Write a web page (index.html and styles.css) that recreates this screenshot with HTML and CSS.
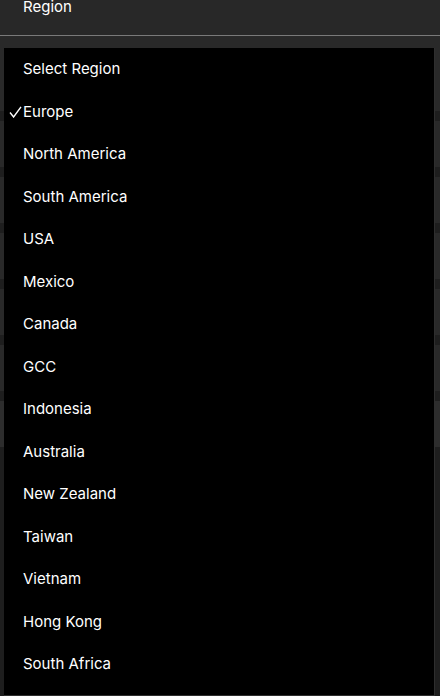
FILE: index.html
```html
<!DOCTYPE html>
<html lang="en">

<head>
  <meta charset="UTF-8" />
  <meta name="viewport" content="width=device-width, initial-scale=1.0" />
  <title>Region Select</title>
  <link rel="stylesheet" href="styles.css">
</head>

<body>
  <div class="field-head">
    <span class="field-label">Region</span>
  </div>
  <div class="rows">
    <div class="row row-first"></div>
    <div class="row"></div>
    <div class="row"></div>
    <div class="row"></div>
    <div class="row"></div>
    <div class="row"></div>
    <div class="row row-hover"></div>
  </div>

  <ul class="dropdown">
    <li class="option">Select Region</li>
    <li class="option selected">
      <svg class="check" width="13" height="12" viewBox="0 0 13 12">
        <polyline points="1,6.5 4.6,11 12,0.8" fill="none" stroke="#fff" stroke-width="1.4" />
      </svg>Europe
    </li>
    <li class="option">North America</li>
    <li class="option">South America</li>
    <li class="option">USA</li>
    <li class="option">Mexico</li>
    <li class="option">Canada</li>
    <li class="option">GCC</li>
    <li class="option">Indonesia</li>
    <li class="option">Australia</li>
    <li class="option">New Zealand</li>
    <li class="option">Taiwan</li>
    <li class="option">Vietnam</li>
    <li class="option">Hong Kong</li>
    <li class="option">South Africa</li>
  </ul>
</body>

</html>
```

FILE: styles.css
```css
body {
  font-family: 'Inter', 'Noto Sans', sans-serif;
  margin: 0;
  background: #1e1e1e;
  color: #fff;
  height: 696px;
  overflow: hidden;
  position: relative;
}

.field-head {
  height: 36px;
  background: #282828;
  border-bottom: 1px solid #7a7a7a;
  padding-left: 23px;
}

.field-label {
  display: block;
  font-size: 15px;
  line-height: 15px;
  margin-top: -1px;
}

.rows {
  display: flex;
  flex-direction: column;
}

.row {
  height: 46px;
  background: #292929;
  margin-bottom: 10px;
}

.row-first {
  height: 75px;
}

.row-hover {
  background: #2d2d2d;
}

.dropdown {
  position: absolute;
  left: 4px;
  top: 48px;
  width: 430px;
  height: 647px;
  margin: 0;
  padding: 0;
  list-style: none;
  background: #000;
  border-right: 1px solid #2e2e2e;
  border-bottom: 1px solid #2e2e2e;
}

.option {
  position: relative;
  height: 42.5px;
  line-height: 41.5px;
  padding-left: 19px;
  font-size: 15px;
  color: #fff;
}

.check {
  position: absolute;
  left: 5px;
  top: 15px;
}
```
